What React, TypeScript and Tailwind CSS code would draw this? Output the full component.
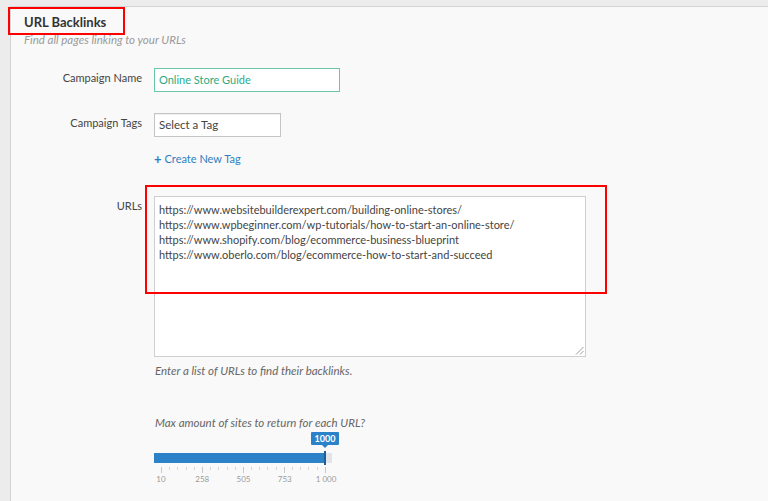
import React from "react";

const urls = [
  "https://www.websitebuilderexpert.com/building-online-stores/",
  "https://www.wpbeginner.com/wp-tutorials/how-to-start-an-online-store/",
  "https://www.shopify.com/blog/ecommerce-business-blueprint",
  "https://www.oberlo.com/blog/ecommerce-how-to-start-and-succeed",
];

const ticks = Array.from({ length: 21 }, (_, i) => i % 5 === 0);
const tickLabels = ["10", "258", "505", "753", "1 000"];

function Slider() {
  return (
    <div className="flex w-[186px] flex-col">
      <div className="ml-[157px] flex w-[28px] flex-col items-center">
        <div className="h-[13px] w-[28px] rounded-[1px] bg-[#2b82c8] text-center text-[9px] font-bold leading-[13px] text-white">
          1000
        </div>
        <div className="h-0 w-0 border-l-[3px] border-r-[3px] border-t-[3px] border-l-transparent border-r-transparent border-t-[#2b82c8]" />
      </div>
      <div className="mt-[3px] flex h-[14px] w-[178px] items-center">
        <div className="h-[10px] w-[170px] bg-[#2b82c8]" />
        <div className="h-[14px] w-[2px] bg-[#1f5f98]" />
        <div className="h-[10px] flex-1 bg-[#e3e4ea]" />
      </div>
      <div className="ml-[7px] mt-[2px] flex w-[165px] items-start justify-between">
        {ticks.map((major, i) => (
          <div key={i} className={major ? "h-[6px] w-px bg-[#c8c8c8]" : "h-[3px] w-px bg-[#d6d6d6]"} />
        ))}
      </div>
      <div className="ml-[7px] mt-[1px] flex w-[165px] justify-between">
        {tickLabels.map((t) => (
          <div key={t} className="flex w-0 justify-center">
            <span className="whitespace-nowrap text-[8px] leading-[10px] text-[#999]">{t}</span>
          </div>
        ))}
      </div>
    </div>
  );
}

function Row({ label, children }: { label: string; children: React.ReactNode }) {
  return (
    <div className="flex gap-[12px]">
      <div className="w-[131px] pt-[3px] text-right text-[11px] leading-[14px] text-[#444]">{label}</div>
      {children}
    </div>
  );
}

export default function App() {
  return (
    <div
      className="relative h-[501px] w-[768px] overflow-hidden bg-[#ececec] pl-[10px] pt-[6px]"
      style={{ fontFamily: "Lato, 'Open Sans', sans-serif" }}
    >
      <div className="flex h-full flex-col border-l border-t border-[#d4d4d4] bg-[#f9f9f9] pt-[7px]">
        <div className="flex flex-col gap-[3px] pl-[13px]">
          <div className="text-[13px] font-bold leading-[16px] text-[#333]">URL Backlinks</div>
          <div className="text-[11.5px] italic leading-[14px] text-[#9a9a9a]">Find all pages linking to your URLs</div>
        </div>

        <div className="mt-[21px] flex flex-col gap-[21px]">
          <Row label="Campaign Name">
            <div className="h-[24px] w-[186px] border border-[#6cc5a8] bg-white px-[4px] text-[11px] leading-[22px] text-[#2eaa82]">
              Online Store Guide
            </div>
          </Row>
          <Row label="Campaign Tags">
            <div className="h-[24px] w-[127px] border border-[#c4c4c4] bg-white px-[4px] text-[11.5px] leading-[22px] text-[#444] shadow-[inset_0_1px_1px_rgba(0,0,0,0.06)]">
              Select a Tag
            </div>
          </Row>
        </div>

        <div className="ml-[143px] mt-[15px] flex items-center gap-[3px] text-[11px] leading-[14px] text-[#2d7fc1]">
          <span className="text-[13px] font-bold">+</span>
          <span>Create New Tag</span>
        </div>

        <div className="mt-[30px]">
          <Row label="URLs">
            <div className="relative flex h-[161px] w-[432px] flex-col border border-[#cfcfcf] bg-white px-[4px] pt-[5px] text-[11px] leading-[15px] text-[#444]">
              {urls.map((u) => (
                <div key={u} className="whitespace-nowrap">{u}</div>
              ))}
              <svg className="absolute bottom-[1px] right-[1px]" width="9" height="9" viewBox="0 0 9 9">
                <line x1="8.5" y1="1" x2="1" y2="8.5" stroke="#9a9a9a" strokeWidth="1" />
                <line x1="8.5" y1="5" x2="5" y2="8.5" stroke="#9a9a9a" strokeWidth="1" />
              </svg>
            </div>
          </Row>
        </div>

        <div className="ml-[144px] mt-[7px] text-[11.5px] italic leading-[14px] text-[#666]">
          Enter a list of URLs to find their backlinks.
        </div>

        <div className="ml-[144px] mt-[38px] text-[11.5px] italic leading-[14px] text-[#666]">
          Max amount of sites to return for each URL?
        </div>

        <div className="ml-[143px] mt-[2px]">
          <Slider />
        </div>
      </div>

      {/* annotation boxes */}
      <div className="absolute left-[8px] top-[7px] h-[28px] w-[117px] border-2 border-[#ff0000]" />
      <div className="absolute left-[145px] top-[185px] h-[109px] w-[462px] border-2 border-[#ff0000]" />
    </div>
  );
}
